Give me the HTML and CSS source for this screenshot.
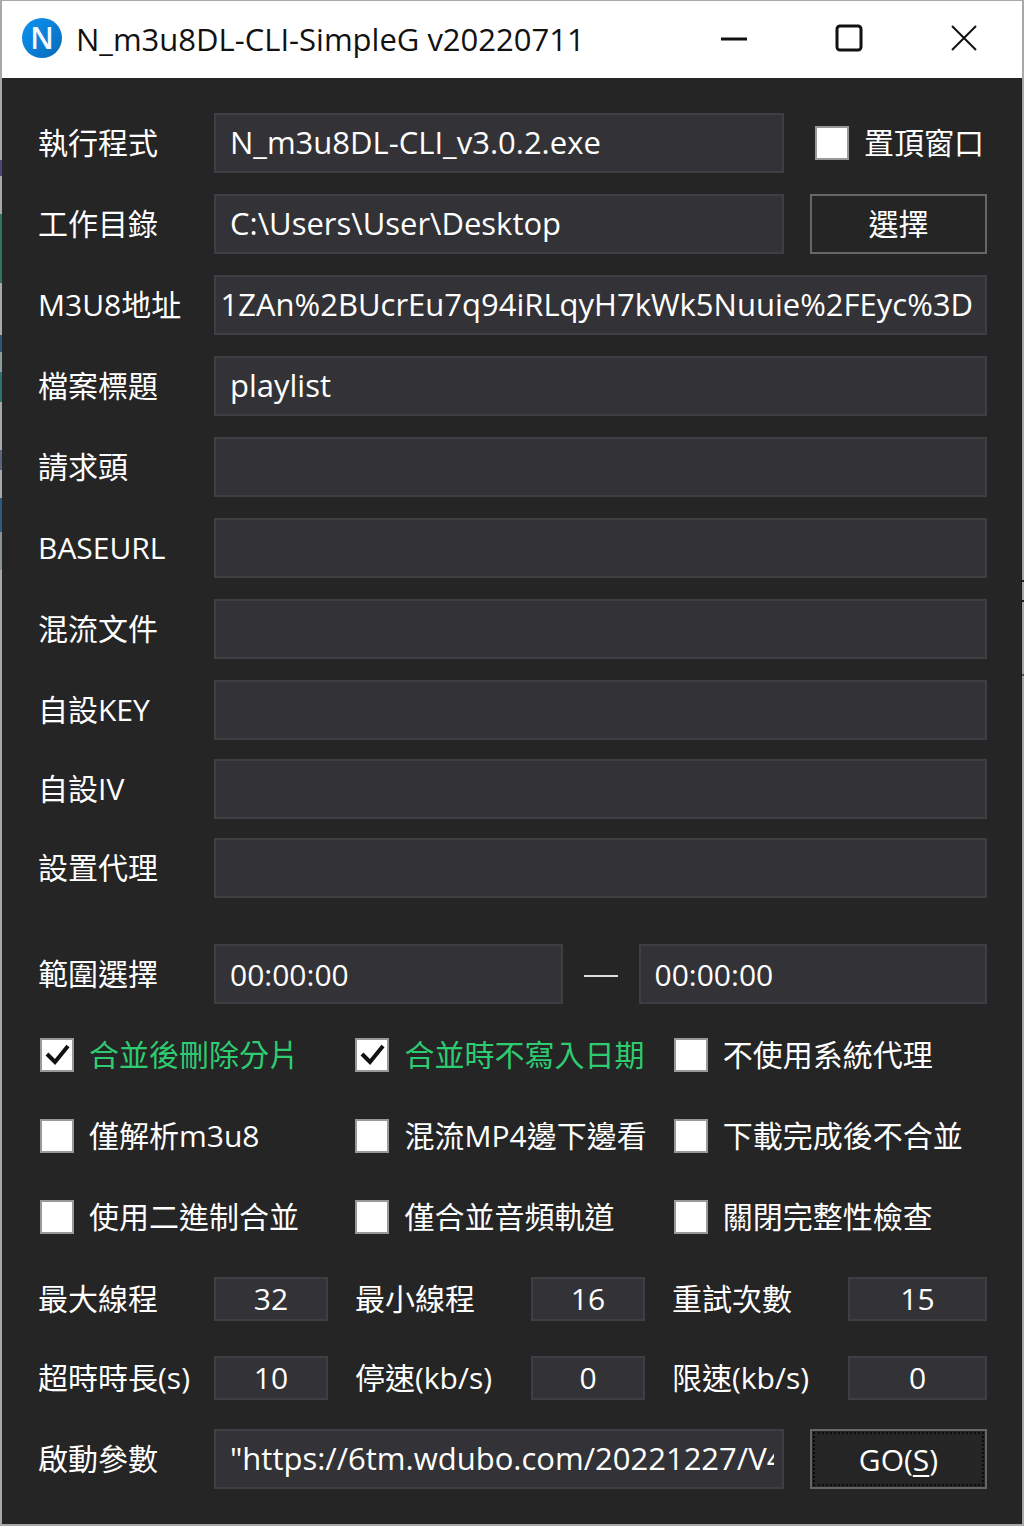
FILE: index.html
```html
<!DOCTYPE html>
<html lang="zh-Hant">
<head>
<meta charset="utf-8">
<meta name="viewport" content="width=device-width, initial-scale=1">
<title>N_m3u8DL-CLI-SimpleG v20220711</title>
<link rel="stylesheet" href="styles.css">
</head>
<body>
<div class="window">
  <header class="titlebar">
    <svg class="app-icon" viewBox="0 0 40 40" aria-hidden="true">
      <defs>
        <linearGradient id="disc" x1="0" y1="0" x2="1" y2="1">
          <stop offset="0" stop-color="#0c93f0"/>
          <stop offset="0.5" stop-color="#0a80d8"/>
          <stop offset="1" stop-color="#0a68b4"/>
        </linearGradient>
      </defs>
      <circle cx="20" cy="20" r="20" fill="url(#disc)"/>
      <text class="app-letter" x="20" y="31" text-anchor="middle">N</text>
    </svg>
    <h1 class="title">N_m3u8DL-CLI-SimpleG v20220711</h1>
    <div class="caption-buttons">
      <button type="button" class="caption" aria-label="最小化"><svg viewBox="0 0 28 28"><path d="M1 15H27"/></svg></button>
      <button type="button" class="caption" aria-label="最大化"><svg viewBox="0 0 28 28"><rect x="2" y="2" width="24" height="24" rx="3"/></svg></button>
      <button type="button" class="caption caption-close" aria-label="關閉"><svg viewBox="0 0 28 28"><path d="M2 2L26 26M26 2L2 26"/></svg></button>
    </div>
  </header>

  <form class="form">
    <div class="fields">
      <div class="row row-side">
        <label for="exe">執行程式</label>
        <input class="box" id="exe" type="text" value="N_m3u8DL-CLI_v3.0.2.exe">
        <label class="check check-top"><input type="checkbox">置頂窗口</label>
      </div>
      <div class="row row-side">
        <label for="dir">工作目錄</label>
        <input class="box" id="dir" type="text" value="C:\Users\User\Desktop">
        <button type="button" class="btn">選擇</button>
      </div>
      <div class="row">
        <label for="url">M3U8地址</label>
        <input class="box box-end" id="url" type="text" value="1ZAn%2BUcrEu7q94iRLqyH7kWk5Nuuie%2FEyc%3D">
      </div>
      <div class="row">
        <label for="name">檔案標題</label>
        <input class="box" id="name" type="text" value="playlist">
      </div>
      <div class="row">
        <label for="headers">請求頭</label>
        <input class="box" id="headers" type="text">
      </div>
      <div class="row">
        <label for="base">BASEURL</label>
        <input class="box" id="base" type="text">
      </div>
      <div class="row">
        <label for="mux">混流文件</label>
        <input class="box" id="mux" type="text">
      </div>
      <div class="row">
        <label for="key">自設KEY</label>
        <input class="box" id="key" type="text">
      </div>
    </div>

    <div class="fields fields-extra">
      <div class="row">
        <label for="iv">自設IV</label>
        <input class="box" id="iv" type="text">
      </div>
      <div class="row">
        <label for="proxy">設置代理</label>
        <input class="box" id="proxy" type="text">
      </div>
    </div>

    <div class="row row-range">
      <label for="from">範圍選擇</label>
      <input class="box box-time" id="from" type="text" value="00:00:00">
      <span class="dash"></span>
      <input class="box box-time" id="to" type="text" value="00:00:00" aria-label="結束時間">
    </div>

    <div class="thirds checks">
      <label class="check"><input type="checkbox" checked><span>合並後刪除分片</span></label>
      <label class="check"><input type="checkbox" checked><span>合並時不寫入日期</span></label>
      <label class="check"><input type="checkbox"><span>不使用系統代理</span></label>
      <label class="check"><input type="checkbox"><span>僅解析m3u8</span></label>
      <label class="check"><input type="checkbox"><span>混流MP4邊下邊看</span></label>
      <label class="check"><input type="checkbox"><span>下載完成後不合並</span></label>
      <label class="check"><input type="checkbox"><span>使用二進制合並</span></label>
      <label class="check"><input type="checkbox"><span>僅合並音頻軌道</span></label>
      <label class="check"><input type="checkbox"><span>關閉完整性檢查</span></label>
    </div>

    <div class="thirds numbers">
      <div class="row"><label for="max">最大線程</label><input class="box box-num" id="max" type="text" value="32"></div>
      <div class="row"><label for="min">最小線程</label><input class="box box-num" id="min" type="text" value="16"></div>
      <div class="row"><label for="retry">重試次數</label><input class="box box-num" id="retry" type="text" value="15"></div>
      <div class="row"><label for="timeout">超時時長(s)</label><input class="box box-num" id="timeout" type="text" value="10"></div>
      <div class="row"><label for="stop">停速(kb/s)</label><input class="box box-num" id="stop" type="text" value="0"></div>
      <div class="row"><label for="limit">限速(kb/s)</label><input class="box box-num" id="limit" type="text" value="0"></div>
    </div>

    <div class="row row-side">
      <label for="args">啟動參數</label>
      <input class="box" id="args" type="text" value="&quot;https://6tm.wdubo.com/20221227/V4">
      <button type="submit" class="btn btn-default" accesskey="s">GO(<u>S</u>)</button>
    </div>
  </form>
</div>
</body>
</html>
```
FILE: styles.css
```css
* {
  box-sizing: border-box;
}

/* The desktop shows through as a thin strip on either side of the window. */
body {
  margin: 0;
  padding: 1px 2px 2px;
  background:
    linear-gradient(#a8a8a8 160px, #4a4a78 160px 176px, #a8a8a8 176px 214px, #2f7559 214px 283px,
      #a8a8a8 283px 335px, #2c5878 335px 352px, #8e9c9e 352px 372px, #2d7474 372px 402px,
      #a8a8a8 402px 450px, #5c6480 450px 470px, #a8a8a8 470px 498px, #2d5a80 498px 532px,
      #8a9494 532px 570px, #a8a8a8 570px) 0 0 / 2px 100% no-repeat,
    linear-gradient(#a8a8a8 580px, #222 580px 582px, #a8a8a8 582px 600px, #222 600px 602px,
      #a8a8a8 602px 674px, #555 674px 676px, #a8a8a8 676px) 100% 0 / 2px 100% no-repeat,
    #a8a8a8;
  color: #fff;
  font: 30px/40px "Open Sans", "Noto Sans CJK TC", sans-serif;
}

input,
button {
  font: inherit;
  color: inherit;
}

.window {
  background: #252525;
}

.titlebar {
  display: flex;
  align-items: center;
  height: 77px;
  padding-left: 20px;
  background: #fff;
  color: #111;
}

.app-icon {
  width: 40px;
  height: 40px;
  margin: 0 14px 4px 0;
}

.app-letter {
  fill: #f2f8fd;
  font-size: 30px;
  font-weight: 600;
}

.title {
  flex: 1;
  margin: 0;
  padding-bottom: 2px;
  font-size: 31px;
  font-weight: 400;
  white-space: nowrap;
}

.caption-buttons {
  display: flex;
  align-self: flex-start;
  margin-right: 1px;
}

.caption {
  width: 115px;
  height: 73px;
  padding: 0;
  border: 0;
  background: none;
}

.caption svg {
  display: block;
  width: 28px;
  height: 28px;
  margin: auto;
  fill: none;
  stroke: #111;
  stroke-width: 3;
}

.caption-close svg {
  stroke-width: 2;
}

.form {
  padding: 35px 34px 35px 36px;
  border: solid #1a1a1a;
  border-width: 0 1px 0 0;
}

.fields {
  display: grid;
  gap: 21px;
}

.fields-extra {
  gap: 19px;
  margin-top: 19px;
}

.row {
  display: grid;
  grid-template-columns: 176px minmax(0, 1fr);
  align-items: center;
  white-space: nowrap;
}

.row-side {
  grid-template-columns: 176px minmax(0, 1fr) 26px 177px;
}

.row-side > :last-child {
  grid-column: 4;
}

.row-range {
  grid-template-columns: 176px minmax(0, 1fr) 76px minmax(0, 1fr);
  margin-top: 46px;
}

.box {
  width: 100%;
  height: 60px;
  padding: 0 8px 2px 14px;
  border: 2px solid #3f3f43;
  border-radius: 0;
  outline: 0;
  background: #333337;
  font-size: 31px;
}

.box-end {
  padding: 0 12px 2px 4px;
  text-align: right;
}

.box-time {
  padding-bottom: 0;
  font-size: 30px;
}

.box-num {
  height: 44px;
  padding: 0 0 2px;
  font-size: 30px;
  text-align: center;
}

.dash {
  width: 34px;
  height: 2px;
  margin: 4px auto 0;
  background: #ddd;
}

.btn {
  height: 60px;
  padding: 0;
  border: 2px solid #666;
  background: #252525;
}

.btn-default {
  padding-top: 2px;
  outline: 2px dotted #0c0c0c;
  outline-offset: -5px;
}

.btn u {
  text-decoration-thickness: 2px;
  text-underline-offset: 4px;
}

.thirds {
  display: grid;
  grid-template-columns: 290fr 290fr 315fr;
  column-gap: 27px;
}

.checks {
  row-gap: 21px;
  margin-top: 21px;
  padding-left: 2px;
}

.check {
  display: flex;
  align-items: center;
  height: 60px;
  gap: 15px;
  white-space: nowrap;
}

.check-top {
  padding-left: 5px;
}

.check input {
  flex: none;
  appearance: none;
  width: 34px;
  height: 34px;
  margin: 0;
  border: 2px solid #999;
  background: #fff;
}

.check input:checked {
  background: #fff url("data:image/svg+xml,%3Csvg xmlns='http://www.w3.org/2000/svg' viewBox='0 0 30 30'%3E%3Cpath d='M5 14L13 22L26 6' fill='none' stroke='%23111' stroke-width='4'/%3E%3C/svg%3E") center / 30px 30px no-repeat;
}

.check input:checked + span {
  color: #2ecc71;
}

.numbers {
  row-gap: 35px;
  margin: 30px 0 29px;
}
```
